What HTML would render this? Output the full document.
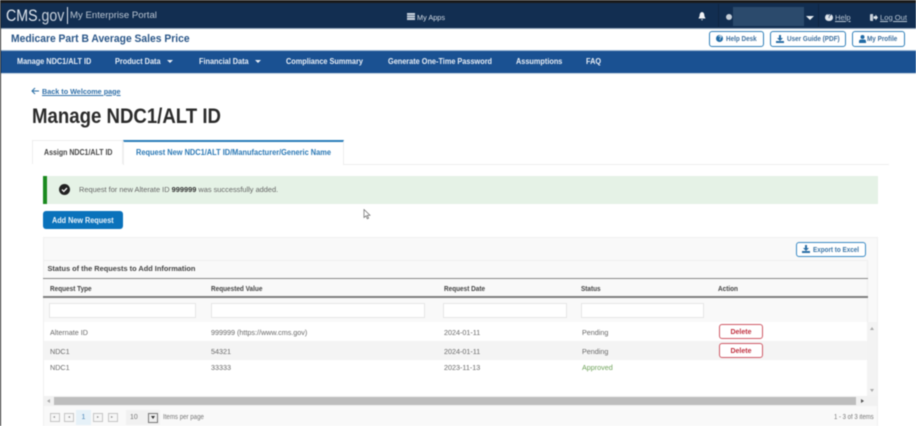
<!DOCTYPE html>
<html lang="en"><head><meta charset="utf-8"><title>Manage NDC1/ALT ID</title>
<style>
html,body{margin:0;padding:0;background:#fff;}
body{width:916px;height:426px;overflow:hidden;position:relative;font-family:"Liberation Sans",sans-serif;}
#w{position:absolute;left:0;top:0;width:916px;height:426px;overflow:hidden;filter:blur(0.45px);}
.a{position:absolute;white-space:nowrap;line-height:1;transform-origin:0 50%;}
.b{position:absolute;box-sizing:border-box;}
.nav{color:#e8eef6;font-size:8px;font-weight:bold;top:57.5px;transform:scaleX(.915);}
.th{color:#444;font-size:7.3px;font-weight:bold;top:284.5px;transform:scaleX(.88);}
.td{color:#6a6a6a;font-size:7.2px;}
.in{background:#fff;border:1px solid #e6e6e6;top:303px;height:15px;}
.btn{background:#fff;border:1px solid #2f7fb8;border-radius:3px;height:16px;top:31px;}
.bt{top:35px;font-size:7.3px;font-weight:bold;color:#3b6f9f;transform:scaleX(.87);}
.del{left:719px;width:44px;height:15px;border:1.3px solid #cf5a66;border-radius:3px;background:#fff;color:#c0303f;font-size:7px;font-weight:bold;text-align:center;line-height:15px;}
.pg{top:413px;width:10px;height:9px;border:1px solid #c4c4c4;background:#f6f6f6;}
</style></head><body><div id="w">
<div class="b" style="left:0;top:0;width:916px;height:3px;background:#1a1a1a"></div>
<div class="b" style="left:0;top:0;width:1px;height:426px;background:#222"></div>
<div class="b" style="left:1px;top:3px;width:915px;height:25px;background:#122e51"></div>
<div class="b" style="left:1px;top:28px;width:915px;height:1px;background:#8ea3ba"></div>
<div class="a" style="left:6px;top:8px;font-size:16.5px;color:#dfe6ee;transform:scaleX(.86)">CMS<span style="color:#c5ced9">.gov</span></div>
<div class="b" style="left:66.5px;top:7px;width:1px;height:17px;background:#dfe6ee"></div>
<div class="a" style="left:70px;top:10.5px;font-size:9.6px;color:#b9c4d1">My Enterprise Portal</div>
<svg class="b" style="left:407px;top:13px" width="8" height="7"><rect width="8" height="7" fill="#c9d2dd"/><path d="M0 2.3h8M0 4.6h8" stroke="#122e51" stroke-width=".5"/></svg>
<div class="a" style="left:417px;top:13.5px;font-size:7.3px;color:#d5dde6">My Apps</div>
<svg class="b" style="left:698px;top:12px" width="8" height="9"><path d="M4 0C2 .5 1.6 2 1.6 4L.5 6.5h7L6.4 4C6.4 2 6 .5 4 0zM3 7.2h2L4 8.6z" fill="#f2f4f7"/></svg>
<div class="b" style="left:718px;top:4px;width:1px;height:23px;background:#0e2542"></div>
<div class="b" style="left:726px;top:14px;width:6px;height:6px;border-radius:50%;background:#c5ced8"></div>
<div class="b" style="left:733px;top:7px;width:71px;height:19px;background:#2b4a6c"></div>
<div class="b" style="left:806px;top:16px;width:0;height:0;border-left:4px solid transparent;border-right:4px solid transparent;border-top:4px solid #e8edf2"></div>
<div class="b" style="left:818px;top:4px;width:1px;height:23px;background:#0e2542"></div>
<div class="b" style="left:825px;top:13.5px;width:7.5px;height:7.5px;border-radius:50%;background:#dfe5ec"></div>
<div class="a" style="left:827.2px;top:14px;font-size:6.5px;font-weight:bold;color:#122e51">?</div>
<div class="a" style="left:835px;top:13.5px;font-size:7.6px;color:#b9c6d4;text-decoration:underline">Help</div>
<svg class="b" style="left:870px;top:14px" width="8" height="7"><path d="M0 1Q0 0 1 0H3V7H1Q0 7 0 6z" fill="#c9d2dd"/><path d="M3.5 2.3H5.5V.6L8 3.5 5.5 6.4V4.7H3.5z" fill="#e0e6ec"/></svg>
<div class="a" style="left:880px;top:13.5px;font-size:7.6px;color:#b9c6d4;text-decoration:underline">Log Out</div>

<div class="a" style="left:11px;top:33.5px;font-size:10.6px;font-weight:bold;color:#2a5688;transform:scaleX(.973)">Medicare Part B Average Sales Price</div>
<div class="b btn" style="left:709px;width:55px"></div>
<div class="b" style="left:716px;top:35px;width:7px;height:7px;border-radius:50%;background:#1f6aa5"></div>
<div class="a" style="left:718.2px;top:35.5px;font-size:6px;font-weight:bold;color:#fff">?</div>
<div class="a bt" style="left:726px">Help Desk</div>
<div class="b btn" style="left:770px;width:76px"></div>
<svg class="b" style="left:776px;top:35px" width="8" height="8"><path d="M3 0h2v3h2L4 6 1 3h2zM0 6h8v2H0z" fill="#2a6ea5"/></svg>
<div class="a bt" style="left:787px">User Guide (PDF)</div>
<div class="b btn" style="left:852px;width:53px"></div>
<svg class="b" style="left:859px;top:35px" width="7" height="8"><circle cx="3.5" cy="2" r="2" fill="#1f6aa5"/><path d="M0 8V6.5Q0 4.5 2 4.5h3Q7 4.5 7 6.5V8z" fill="#1f6aa5"/></svg>
<div class="a bt" style="left:867px">My Profile</div>

<div class="b" style="left:1px;top:50px;width:915px;height:1px;background:#9bb6d3"></div>
<div class="b" style="left:1px;top:51px;width:915px;height:22px;background:#1a5192"></div>
<div class="b" style="left:1px;top:73px;width:915px;height:1px;background:#cfdbe8"></div>
<div class="a nav" style="left:17px">Manage NDC1/ALT ID</div>
<div class="a nav" style="left:115px">Product Data</div>
<div class="b" style="left:167px;top:60px;border-left:3px solid transparent;border-right:3px solid transparent;border-top:3px solid #e8eef6"></div>
<div class="a nav" style="left:198.5px">Financial Data</div>
<div class="b" style="left:255px;top:60px;border-left:3px solid transparent;border-right:3px solid transparent;border-top:3px solid #e8eef6"></div>
<div class="a nav" style="left:285.5px">Compliance Summary</div>
<div class="a nav" style="left:388px">Generate One-Time Password</div>
<div class="a nav" style="left:516px">Assumptions</div>
<div class="a nav" style="left:585.5px">FAQ</div>

<svg class="b" style="left:31px;top:87px" width="8" height="8"><path d="M4 1L1 4l3 3M1 4h7" fill="none" stroke="#2a6ea5" stroke-width="1"/></svg>
<div class="a" style="left:42px;top:87.5px;font-size:7.7px;font-weight:bold;color:#2f6fa8;text-decoration:underline;transform:scaleX(.94)">Back to Welcome page</div>
<div class="a" style="left:32px;top:105.5px;font-size:21.5px;font-weight:bold;color:#2b2b2b;transform:scaleX(.866)">Manage NDC1/ALT ID</div>

<div class="b" style="left:32px;top:140px;width:91px;height:24px;border:1px solid #eee;border-bottom:0;background:#fff"></div>
<div class="b" style="left:123px;top:140px;width:221px;height:25px;border:1px solid #eee;border-top:2px solid #2a7dba;border-bottom:0;background:#fff"></div>
<div class="b" style="left:344px;top:164px;width:545px;height:1px;background:#eee"></div>
<div class="a" style="left:43.5px;top:148.5px;font-size:7.8px;font-weight:bold;color:#444;transform:scaleX(.9)">Assign NDC1/ALT ID</div>
<div class="a" style="left:135.5px;top:148.5px;font-size:7.8px;font-weight:bold;color:#2a78b5;transform:scaleX(.95)">Request New NDC1/ALT ID/Manufacturer/Generic Name</div>

<div class="b" style="left:43px;top:176px;width:835px;height:28px;background:#e5f2e6"></div>
<div class="b" style="left:43px;top:176px;width:4px;height:28px;background:#1b8a1f"></div>
<svg class="b" style="left:59px;top:184px" width="11" height="11"><circle cx="5.5" cy="5.5" r="5.5" fill="#222"/><path d="M3 5.6l1.8 1.8L8 4" fill="none" stroke="#fff" stroke-width="1.3"/></svg>
<div class="a" style="left:78.5px;top:185.5px;font-size:7.6px;color:#666;transform:scaleX(.975)">Request for new Alterate ID <b style="color:#333">999999</b> was successfully added.</div>

<div class="b" style="left:43px;top:211px;width:80px;height:18px;background:#0a72bb;border-radius:3px"></div>
<div class="a" style="left:51.5px;top:216.5px;font-size:7.8px;font-weight:bold;color:#eaf3fa;transform:scaleX(.93)">Add New Request</div>
<svg class="b" style="left:363px;top:209px" width="8" height="11"><path d="M1 .5v8l2-1.7 1.3 3 1.3-.6-1.3-2.9H7z" fill="#fff" stroke="#666" stroke-width=".7"/></svg>

<div class="b" style="left:43px;top:237px;width:835px;height:189px;background:#f9f9f9;border:1px solid #f0f0f0;border-bottom:0"></div>
<div class="b" style="left:43px;top:260px;width:825px;height:1px;background:#efefef"></div>
<div class="b" style="left:867px;top:260px;width:1px;height:62px;background:#eee"></div>
<div class="b" style="left:796px;top:241.5px;width:70px;height:15px;background:#fff;border:1px solid #3a8ac4;border-radius:3px"></div>
<svg class="b" style="left:802px;top:245px" width="8" height="8"><path d="M3 0h2v3h2L4 6 1 3h2zM0 6h8v2H0z" fill="#2a6ea5"/></svg>
<div class="a" style="left:813px;top:245.5px;font-size:7.2px;font-weight:bold;color:#3b76a8;transform:scaleX(.88)">Export to Excel</div>
<div class="a" style="left:47.5px;top:265px;font-size:7.4px;font-weight:bold;color:#444">Status of the Requests to Add Information</div>
<div class="b" style="left:43px;top:278px;width:825px;height:1px;background:#888"></div>
<div class="b" style="left:43px;top:296px;width:825px;height:2px;background:#808080"></div>
<div class="a th" style="left:49.5px">Request Type</div>
<div class="a th" style="left:211px">Requested Value</div>
<div class="a th" style="left:443.5px">Request Date</div>
<div class="a th" style="left:581px">Status</div>
<div class="a th" style="left:718px">Action</div>
<div class="b in" style="left:49px;width:147px"></div>
<div class="b in" style="left:211px;width:214px"></div>
<div class="b in" style="left:443px;width:124px"></div>
<div class="b in" style="left:581px;width:123px"></div>

<div class="b" style="left:44px;top:322px;width:823px;height:19px;background:#fff"></div>
<div class="b" style="left:44px;top:341px;width:823px;height:19px;background:#f4f4f4"></div>
<div class="b" style="left:44px;top:360px;width:823px;height:36px;background:#fff"></div>
<div class="b" style="left:867px;top:322px;width:10px;height:74px;background:#f3f3f3"></div>
<div class="b" style="left:870px;top:327px;border-left:2.5px solid transparent;border-right:2.5px solid transparent;border-bottom:3px solid #aaa"></div>
<div class="b" style="left:870px;top:389px;border-left:2.5px solid transparent;border-right:2.5px solid transparent;border-top:3px solid #aaa"></div>

<div class="a td" style="left:50px;top:328.5px">Alternate ID</div>
<div class="a td" style="left:211px;top:328.5px">999999 (https://www.cms.gov)</div>
<div class="a td" style="left:444px;top:328.5px">2024-01-11</div>
<div class="a td" style="left:582px;top:328.5px">Pending</div>
<div class="b del" style="top:324px">Delete</div>
<div class="a td" style="left:50px;top:347.5px">NDC1</div>
<div class="a td" style="left:211px;top:347.5px">54321</div>
<div class="a td" style="left:444px;top:347.5px">2024-01-11</div>
<div class="a td" style="left:582px;top:347.5px">Pending</div>
<div class="b del" style="top:343px">Delete</div>
<div class="a td" style="left:50px;top:364px">NDC1</div>
<div class="a td" style="left:211px;top:364px">33333</div>
<div class="a td" style="left:444px;top:364px">2023-11-13</div>
<div class="a td" style="left:582px;top:364px;color:#6fa35a">Approved</div>

<div class="b" style="left:44px;top:396px;width:833px;height:10px;background:#f1f1f1"></div>
<div class="b" style="left:54px;top:397px;width:802px;height:8px;background:#bdbdbd"></div>
<div class="b" style="left:47px;top:399px;border-top:2.5px solid transparent;border-bottom:2.5px solid transparent;border-right:3px solid #aaa"></div>
<div class="b" style="left:860.5px;top:399px;border-top:2.5px solid transparent;border-bottom:2.5px solid transparent;border-left:3px solid #555"></div>

<div class="b pg" style="left:49.5px"></div>
<div class="b pg" style="left:64px"></div>
<div class="b" style="left:76px;top:410px;width:15px;height:15px;background:#e6f1f8"></div>
<div class="a" style="left:81.5px;top:414px;font-size:7px;color:#4a86b8">1</div>
<div class="b pg" style="left:93px"></div>
<div class="b pg" style="left:107.5px"></div>
<div class="b" style="left:53px;top:416px;border-top:1.5px solid transparent;border-bottom:1.5px solid transparent;border-right:2.5px solid #888"></div>
<div class="b" style="left:68px;top:416px;border-top:1.5px solid transparent;border-bottom:1.5px solid transparent;border-right:2.5px solid #888"></div>
<div class="b" style="left:97px;top:416px;border-top:1.5px solid transparent;border-bottom:1.5px solid transparent;border-left:2.5px solid #888"></div>
<div class="b" style="left:111px;top:416px;border-top:1.5px solid transparent;border-bottom:1.5px solid transparent;border-left:2.5px solid #888"></div>
<div class="b" style="left:126px;top:410px;width:34px;height:15px;background:#f1f1f1"></div>
<div class="a" style="left:130px;top:414px;font-size:7px;color:#777">10</div>
<div class="b" style="left:148px;top:412.5px;width:10px;height:10px;border:1px solid #777;background:#eee"></div>
<div class="b" style="left:151px;top:416px;border-left:2px solid transparent;border-right:2px solid transparent;border-top:3px solid #333"></div>
<div class="a" style="left:163px;top:415px;font-size:6.9px;color:#777;transform:scaleX(.89)">Items per page</div>
<div class="a" style="left:834px;top:415px;font-size:6.9px;color:#777;transform:scaleX(.87)">1 - 3 of 3 items</div>
</div></body></html>
